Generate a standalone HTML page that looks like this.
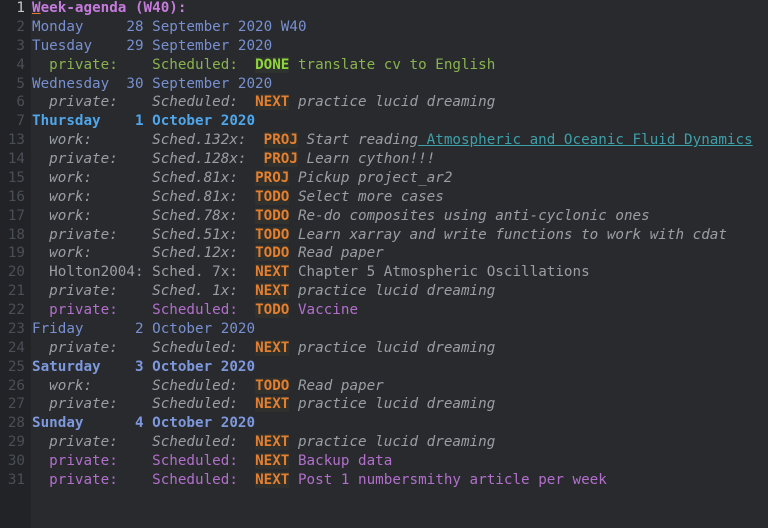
<!DOCTYPE html>
<html><head><meta charset="utf-8"><style>
html,body{margin:0;padding:0;width:768px;height:528px;overflow:hidden;background:#282a2e;}
#g{position:absolute;left:0;top:0;width:31px;height:528px;background:#222327;}
pre{position:absolute;margin:0;top:-1px;font-family:"DejaVu Sans Mono","Liberation Mono",monospace;font-size:14.25px;line-height:18.88px;color:#9a9ea3;}
#n{left:0;width:25px;text-align:right;color:#4a4e56;}
#t{left:32px;}
.h{color:#c57bdb;font-weight:bold}
.d{color:#7890cf}
.td{color:#4fa6ea;font-weight:bold}
.we{color:#7d98dc;font-weight:bold}
.gr{color:#89b34f}
.done{color:#8fd63a;font-weight:bold;background:#2f3330}
.nx{color:#e57f2f;font-weight:bold;background:#30302c}
i{font-style:italic}
.p{color:#b26fcb}
.l{color:#3ea0a8;text-decoration:underline}
</style></head><body><div id="g"></div>
<pre id="n"><span style="color:#c8c8c8">1</span>
2
3
4
5
6
7
13
14
15
16
17
18
19
20
21
22
23
24
25
26
27
28
29
30
31</pre>
<pre id="t"><span class="h"><span style="text-decoration:underline;text-decoration-color:#e57f2f">W</span>eek-agenda (W40):</span>
<span class="d">Monday     28 September 2020 W40</span>
<span class="d">Tuesday    29 September 2020</span>
<span class="gr">  private:    Scheduled:  </span><span class="done">DONE</span><span class="gr"> translate cv to English</span>
<span class="d">Wednesday  30 September 2020</span>
<i>  private:    Scheduled:  </i><span class="nx">NEXT</span><i> practice lucid dreaming</i>
<span class="td">Thursday    1 October 2020</span>
<i>  work:       Sched.132x:  </i><span class="nx">PROJ</span><i> Start reading</i><span class="l"> Atmospheric and Oceanic Fluid Dynamics</span>
<i>  private:    Sched.128x:  </i><span class="nx">PROJ</span><i> Learn cython!!!</i>
<i>  work:       Sched.81x:  </i><span class="nx">PROJ</span><i> Pickup project_ar2</i>
<i>  work:       Sched.81x:  </i><span class="nx">TODO</span><i> Select more cases</i>
<i>  work:       Sched.78x:  </i><span class="nx">TODO</span><i> Re-do composites using anti-cyclonic ones</i>
<i>  private:    Sched.51x:  </i><span class="nx">TODO</span><i> Learn xarray and write functions to work with cdat</i>
<i>  work:       Sched.12x:  </i><span class="nx">TODO</span><i> Read paper</i>
<span>  Holton2004: Sched. 7x:  </span><span class="nx">NEXT</span><span> Chapter 5 Atmospheric Oscillations</span>
<i>  private:    Sched. 1x:  </i><span class="nx">NEXT</span><i> practice lucid dreaming</i>
<span class="p">  private:    Scheduled:  </span><span class="nx">TODO</span><span class="p"> Vaccine</span>
<span class="d">Friday      2 October 2020</span>
<i>  private:    Scheduled:  </i><span class="nx">NEXT</span><i> practice lucid dreaming</i>
<span class="we">Saturday    3 October 2020</span>
<i>  work:       Scheduled:  </i><span class="nx">TODO</span><i> Read paper</i>
<i>  private:    Scheduled:  </i><span class="nx">NEXT</span><i> practice lucid dreaming</i>
<span class="we">Sunday      4 October 2020</span>
<i>  private:    Scheduled:  </i><span class="nx">NEXT</span><i> practice lucid dreaming</i>
<span class="p">  private:    Scheduled:  </span><span class="nx">NEXT</span><span class="p"> Backup data</span>
<span class="p">  private:    Scheduled:  </span><span class="nx">NEXT</span><span class="p"> Post 1 numbersmithy article per week</span></pre>
</body></html>
